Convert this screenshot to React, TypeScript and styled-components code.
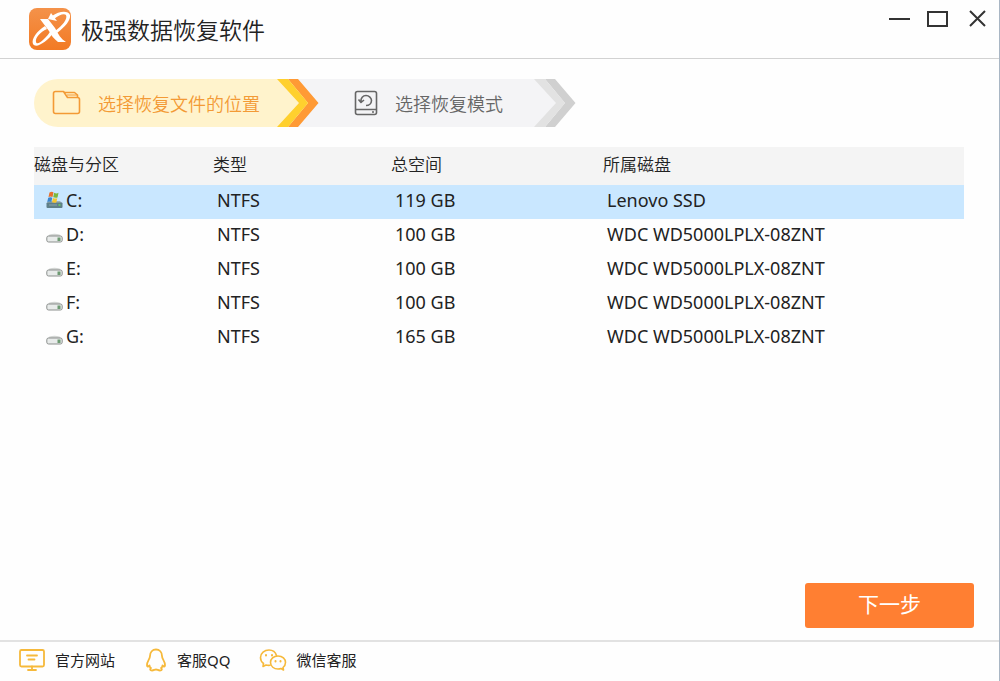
import React from 'react';
import styled, { createGlobalStyle } from 'styled-components';

const GlobalStyle = createGlobalStyle`
  * { box-sizing: border-box; }
  body {
    margin: 0;
    background: #fefefe;
    color: #222;
    font-family: 'Noto Sans', 'Noto Sans CJK SC', sans-serif;
  }
  button { font-family: inherit; cursor: pointer; }
`;

const Window = styled.div`
  display: flex;
  flex-direction: column;
  min-height: 100vh;
  background: #fefefe;
  border-right: 1px solid #a9b6c4;
`;

const TitleBar = styled.header`
  display: flex;
  align-items: center;
  height: 59px;
  padding: 0 11px 0 28px;
  border-bottom: 1px solid #d2d2d2;
`;

const Title = styled.h1`
  flex: 1;
  margin: 0;
  padding-left: 9px;
  font-size: 23px;
  line-height: 32px;
  font-weight: 350;
  color: #222;
  font-family: 'Noto Sans CJK SC', sans-serif;
`;

const WindowControls = styled.div`
  display: flex;
  gap: 14px;
  padding-bottom: 20px;
`;

const ControlButton = styled.button`
  display: flex;
  padding: 0;
  border: 0;
  background: none;
`;

const Main = styled.main`
  flex: 1;
  display: flex;
  flex-direction: column;
  padding: 20px 25px 12px 34px;
`;

const Steps = styled.ol`
  display: flex;
  margin: 0;
  padding: 0;
  list-style: none;
`;

const Step = styled.li<{ $active?: boolean }>`
  display: flex;
  align-items: center;
  gap: ${p => (p.$active ? 16 : 30)}px;
  height: 48px;
  padding-left: ${p => (p.$active ? 18 : 35)}px;
  border-radius: ${p => (p.$active ? '24px 0 0 24px' : '0')};
  background: ${p => (p.$active ? '#fff3cc' : '#f4f4f6')};
  color: ${p => (p.$active ? '#f39a35' : '#666')};
`;

const StepLabel = styled.span`
  display: flex;
  align-items: center;
  gap: 17px;
  font-size: 18px;
  line-height: 26px;
  font-weight: 350;
  font-family: 'Noto Sans CJK SC', sans-serif;
`;

const DiskTable = styled.table`
  width: calc(100% - 10px);
  margin-top: 20px;
  table-layout: fixed;
  border-collapse: collapse;
  text-align: left;
`;

const Column = styled.col<{ $width?: string }>`
  width: ${p => p.$width ?? 'auto'};
`;

const HeadCell = styled.th`
  height: 38px;
  padding: 0 0 4px;
  background: #f4f4f4;
  font-size: 17px;
  line-height: 24px;
  font-weight: 350;
  font-family: 'Noto Sans CJK SC', sans-serif;
`;

const Row = styled.tr<{ $selected?: boolean }>`
  background: ${p => (p.$selected ? '#c9e7ff' : 'transparent')};
`;

const Cell = styled.td`
  height: 34px;
  padding: 0 0 4px 4px;
  font-size: 18px;
  line-height: 24px;
  white-space: nowrap;
`;

const Drive = styled.span`
  display: flex;
  align-items: center;
  gap: 3px;
  padding-left: 8px;
`;

const Actions = styled.div`
  display: flex;
  justify-content: flex-end;
  margin-top: auto;
`;

const NextButton = styled.button`
  width: 169px;
  height: 45px;
  padding: 0 0 4px;
  border: 0;
  border-radius: 3px;
  background: #ff7f32;
  color: #fff;
  font-size: 21px;
  line-height: 30px;
`;

const Footer = styled.footer`
  display: flex;
  align-items: center;
  gap: 29px;
  height: 41px;
  padding: 0 18px 4px;
  border-top: 2px solid #e2e2e2;
`;

const FooterLink = styled.a`
  display: flex;
  align-items: center;
  gap: 9px;
  color: #222;
  font-size: 15px;
  line-height: 20px;
  text-decoration: none;
`;

const Logo = () => (
  <svg width="44" height="44" viewBox="0 0 44 44" aria-hidden="true">
    <defs>
      <linearGradient id="logo" x1="0" y1="0" x2="0" y2="1">
        <stop offset="0" stopColor="#f4924a" />
        <stop offset="1" stopColor="#f27a24" />
      </linearGradient>
    </defs>
    <rect x="1" y="1" width="42" height="42" rx="8" fill="url(#logo)" />
    <path d="M12 12H20L27 21C30 27 33 32 38 35H30C26 32 23 28 21 24Z" fill="#fff" />
    <path d="M17 19C9 24 3 32 5 37C8 42 19 35 26 25L24 22C17 33 9 39 8 35C7 31 12 25 19 22Z" fill="#fff" />
    <path d="M24 9C31 4 40 3 42 8C43 13 37 20 29 26L27 24C34 19 40 12 38 8C36 6 31 8 26 12Z" fill="#fff" />
    <path d="M20 12L23 6L29 14Z" fill="#fff" />
  </svg>
);

const FolderIcon = () => (
  <svg width="29" height="26" viewBox="0 0 29 26" fill="none" stroke="currentColor" strokeWidth="1.6" strokeLinejoin="round" aria-hidden="true">
    <path d="M3.500 1.500H11.500L15.500 7.500H25.500Q27.500 7.500 27.500 9.500V21.500Q27.500 23.500 25.500 23.500H3.500Q1.500 23.500 1.500 21.500V3.500Q1.500 1.500 3.500 1.500Z" />
    <path d="M12 2.500H22.500L25.500 5V7.500" />
    <path d="M15 5H25" strokeWidth="1" />
  </svg>
);

const RestoreIcon = () => (
  <svg width="24" height="26" viewBox="0 0 24 26" fill="none" stroke="currentColor" strokeWidth="1.6" strokeLinejoin="round" aria-hidden="true">
    <rect x="1.500" y="1.500" width="21" height="23" rx="2" />
    <path d="M1.500 19.500H22.500M18 22H20" />
    <path d="M7 11.500C6.500 8 9 5.500 12 5.500C15 5.500 17.500 8 17.500 10.500C17.500 13.500 15 15.500 12 15.500M4.500 9.500L7 12.500L10 10" />
  </svg>
);

const Chevron = ({ outer, inner, before, after }: { outer: string; inner: string; before: string; after: string }) => (
  <svg width="43" height="48" viewBox="0 0 43 48" aria-hidden="true">
    <rect width="43" height="48" fill={after} />
    <path d="M0 0H9L33 24L9 48H0Z" fill={before} />
    <path d="M12 0H22L42.500 24L22 48H12L32 24Z" fill={outer} />
    <path d="M1 0H12L32 24L12 48H1L23 24Z" fill={inner} />
  </svg>
);

const DriveIcon = ({ system }: { system?: boolean }) => (
  <svg width="17" height="18" viewBox="0 0 17 18" aria-hidden="true">
    {system ? (
      <g>
        <path d="M2.500 10H14L16.500 12.500H0.500Z" fill="#9fb2ba" />
        <rect x="0.500" y="11.500" width="16" height="5.500" rx="1" fill="#5f7f88" />
        <path d="M3 14H11" stroke="#8aa6ad" />
        <rect x="12.500" y="13" width="2" height="2" fill="#63c06c" />
        <path d="M3.500 1.500Q6 0 7.500 1.500L6.500 6Q4.500 5 2.500 6Z" fill="#e8702c" />
        <path d="M8.200 1.800Q10.500 3 12.500 1.800L11.500 6.500Q9.500 7 7.200 6.200Z" fill="#7db83c" />
        <path d="M2.200 6.800Q4.500 5.800 6.300 6.800L5.300 11Q3.500 10 1.200 11Z" fill="#3d86cf" />
        <path d="M7 7Q9.500 8 11.300 7.200L10.300 11.500Q8 12 6 11.200Z" fill="#f5c62e" />
      </g>
    ) : (
      <g>
        <path d="M3.500 9.500Q8.500 8 13.500 9.500L16 12.500H1Z" fill="#d3d6d4" />
        <rect x="0.800" y="11" width="15.400" height="6" rx="1.800" fill="#e8ebea" stroke="#8b8f8d" />
        <rect x="11.500" y="12.500" width="3" height="3.500" fill="#6d9a72" />
      </g>
    )}
  </svg>
);

const footerStroke = { fill: 'none', stroke: '#f6b93b', strokeWidth: 1.8, strokeLinejoin: 'round', strokeLinecap: 'round' } as const;

const MonitorIcon = () => (
  <svg width="28" height="24" viewBox="0 0 28 24" {...footerStroke} aria-hidden="true">
    <rect x="2" y="2" width="24" height="16.500" rx="1.500" />
    <path d="M9 7.500H19M10.500 11.500H16.500M14 18.500V22M10 22H18" />
  </svg>
);

const PenguinIcon = () => (
  <svg width="24" height="24" viewBox="-1 0 24 24" {...footerStroke} aria-hidden="true">
    <path d="M11 1.500C7.500 1.500 5 4 5 8C5 11 2 13 2 17C2 19.500 3.500 18.500 4.500 17.500C4.500 19 5 19.500 6 20C4.500 21 5 22.500 7 22.500C9 22.500 9.500 21.500 11 21.500C12.500 21.500 13 22.500 15 22.500C17 22.500 17.500 21 16 20C17 19.500 17.500 19 17.500 17.500C18.500 18.500 20 19.500 20 17C20 13 17 11 17 8C17 4 14.500 1.500 11 1.500Z" />
  </svg>
);

const ChatIcon = () => (
  <svg width="28" height="24" viewBox="0 0 28 24" {...footerStroke} strokeWidth="1.600" aria-hidden="true">
    <path d="M17.500 7.500C16.500 4 13.500 2 10 2C5.500 2 1.500 5 1.500 9.500C1.500 12 2.500 14 4.500 15.500L4 18.500L7 17C8.500 17.500 9.500 17.500 11 17.300" />
    <path d="M19 8C14.500 8 11.500 11 11.500 14.500C11.500 18.500 15 21 19 21C20 21 21 21 22 20.500L24.500 22L24 19.500C25.800 18 26.500 16.500 26.500 14.500C26.500 11 23.500 8 19 8Z" />
    <path d="M7 7V7.500M13 7V7.500M16.500 13V13.500M21.500 13V13.500" strokeWidth="2" />
  </svg>
);

const disks = [
  { name: 'C:', type: 'NTFS', size: '119 GB', device: 'Lenovo SSD', system: true },
  { name: 'D:', type: 'NTFS', size: '100 GB', device: 'WDC WD5000LPLX-08ZNT' },
  { name: 'E:', type: 'NTFS', size: '100 GB', device: 'WDC WD5000LPLX-08ZNT' },
  { name: 'F:', type: 'NTFS', size: '100 GB', device: 'WDC WD5000LPLX-08ZNT' },
  { name: 'G:', type: 'NTFS', size: '165 GB', device: 'WDC WD5000LPLX-08ZNT' },
];

export default function App() {
  return (
    <>
      <GlobalStyle />
      <Window lang="zh-CN">
        <TitleBar>
          <Logo />
          <Title>极强数据恢复软件</Title>
          <WindowControls>
            <ControlButton type="button" aria-label="最小化">
              <svg width="24" height="20" viewBox="0 0 24 20"><path d="M1 10H22" stroke="#333" strokeWidth="2" /></svg>
            </ControlButton>
            <ControlButton type="button" aria-label="最大化">
              <svg width="24" height="20" viewBox="0 0 24 20"><rect x="2" y="3" width="19" height="14" fill="none" stroke="#333" strokeWidth="2" /></svg>
            </ControlButton>
            <ControlButton type="button" aria-label="关闭">
              <svg width="24" height="20" viewBox="0 0 24 20"><path d="M6 2L21 17M21 2L6 17" stroke="#333" strokeWidth="2" /></svg>
            </ControlButton>
          </WindowControls>
        </TitleBar>
        <Main>
          <Steps>
            <Step $active aria-current="step">
              <StepLabel><FolderIcon />选择恢复文件的位置</StepLabel>
              <Chevron outer="#ff9a35" inner="#ffd02e" before="#fff3cc" after="#f4f4f6" />
            </Step>
            <Step>
              <StepLabel><RestoreIcon />选择恢复模式</StepLabel>
              <Chevron outer="#d0d0d0" inner="#e2e2e2" before="#f4f4f6" after="#fefefe" />
            </Step>
          </Steps>
          <DiskTable>
            <colgroup>
              <Column $width="179px" />
              <Column $width="178px" />
              <Column $width="212px" />
              <Column />
            </colgroup>
            <thead>
              <tr>
                <HeadCell scope="col">磁盘与分区</HeadCell>
                <HeadCell scope="col">类型</HeadCell>
                <HeadCell scope="col">总空间</HeadCell>
                <HeadCell scope="col">所属磁盘</HeadCell>
              </tr>
            </thead>
            <tbody>
              {disks.map(disk => (
                <Row key={disk.name} $selected={disk.system}>
                  <Cell>
                    <Drive>
                      <DriveIcon system={disk.system} />
                      {disk.name}
                    </Drive>
                  </Cell>
                  <Cell>{disk.type}</Cell>
                  <Cell>{disk.size}</Cell>
                  <Cell>{disk.device}</Cell>
                </Row>
              ))}
            </tbody>
          </DiskTable>
          <Actions>
            <NextButton type="button">下一步</NextButton>
          </Actions>
        </Main>
        <Footer>
          <FooterLink href="#site"><MonitorIcon />官方网站</FooterLink>
          <FooterLink href="#qq"><PenguinIcon />客服QQ</FooterLink>
          <FooterLink href="#wechat"><ChatIcon />微信客服</FooterLink>
        </Footer>
      </Window>
    </>
  );
}
